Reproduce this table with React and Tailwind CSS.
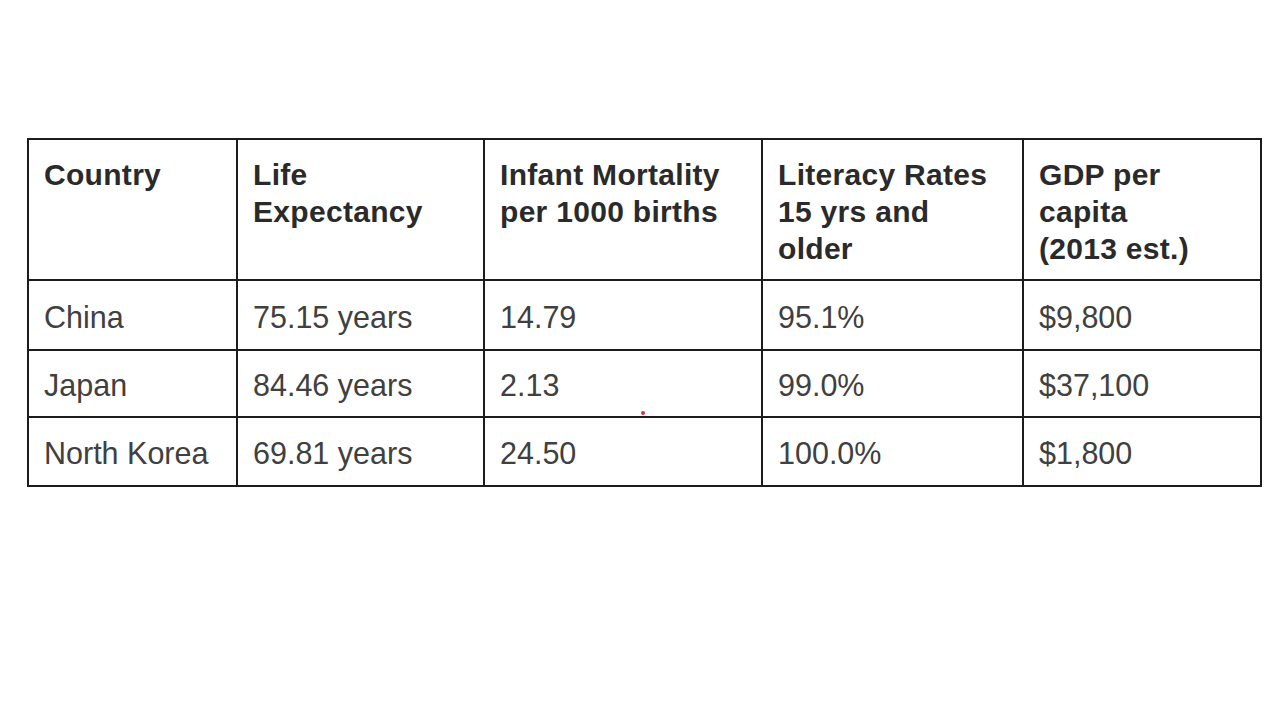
import React from "react";

const head = [
  ["Country"],
  ["Life", "Expectancy"],
  ["Infant Mortality", "per 1000 births"],
  ["Literacy Rates", "15 yrs and", "older"],
  ["GDP per", "capita", "(2013 est.)"],
];

const rows = [
  { h: "h-[70px]", cells: ["China", "75.15 years", "14.79", "95.1%", "$9,800"] },
  { h: "h-[67px]", cells: ["Japan", "84.46 years", "2.13", "99.0%", "$37,100"] },
  { h: "h-[69px]", cells: ["North Korea", "69.81 years", "24.50", "100.0%", "$1,800"] },
];

export default function App() {
  return (
    <div className="relative w-[1280px] h-[720px] bg-white overflow-hidden font-['Liberation_Sans',Arial,sans-serif]">
      <div className="pt-[138px] pl-[27px]">
        <table className="table-fixed border-collapse w-[1233px] border-2 border-[#1c1c1c]">
          <colgroup>
            <col className="w-[209px]" />
            <col className="w-[247px]" />
            <col className="w-[278px]" />
            <col className="w-[261px]" />
            <col className="w-[238px]" />
          </colgroup>
          <thead>
            <tr className="h-[141px]">
              {head.map((lines, i) => (
                <th
                  key={i}
                  className="border-2 border-[#1c1c1c] align-top text-left font-bold text-[30px] leading-[37px] tracking-[0.3px] text-[#2a2a2a] pl-[15px] pt-[16px] pr-2"
                >
                  {lines.map((l, j) => (
                    <div key={j} className="whitespace-nowrap">{l}</div>
                  ))}
                </th>
              ))}
            </tr>
          </thead>
          <tbody>
            {rows.map((r, i) => (
              <tr key={i} className={r.h}>
                {r.cells.map((c, j) => (
                  <td
                    key={j}
                    className="border-2 border-[#1c1c1c] align-middle text-[30.5px] leading-[37px] text-[#404040] pl-[15px] pt-[4px] pr-2 whitespace-nowrap"
                  >
                    {c}
                  </td>
                ))}
              </tr>
            ))}
          </tbody>
        </table>
      </div>
      <div className="absolute left-[641px] top-[411px] w-[4px] h-[4px] rounded-full bg-[#e0304a]" />
    </div>
  );
}
